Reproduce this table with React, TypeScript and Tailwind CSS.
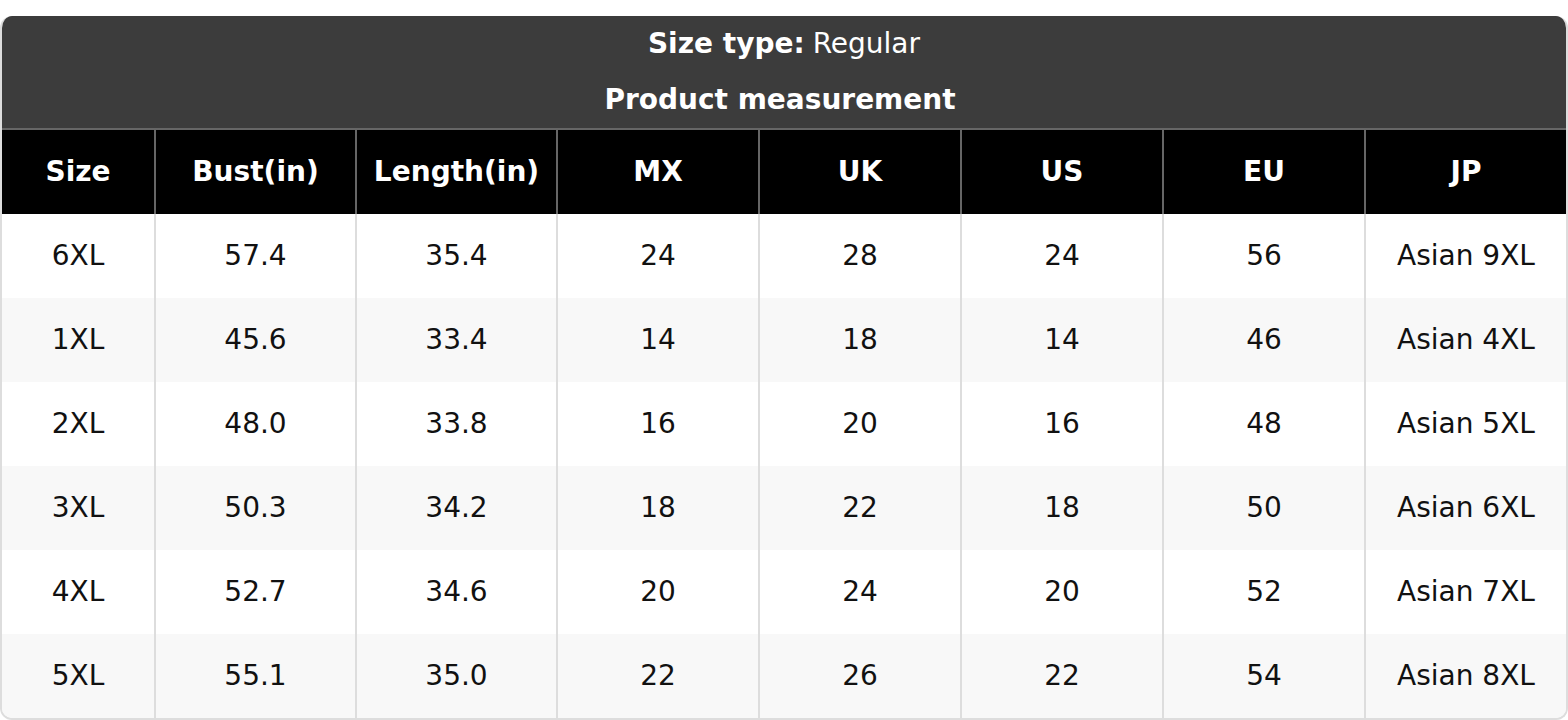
const headers = ['Size', 'Bust(in)', 'Length(in)', 'MX', 'UK', 'US', 'EU', 'JP'];

const rows = [
    ['6XL', '57.4', '35.4', '24', '28', '24', '56', 'Asian 9XL'],
    ['1XL', '45.6', '33.4', '14', '18', '14', '46', 'Asian 4XL'],
    ['2XL', '48.0', '33.8', '16', '20', '16', '48', 'Asian 5XL'],
    ['3XL', '50.3', '34.2', '18', '22', '18', '50', 'Asian 6XL'],
    ['4XL', '52.7', '34.6', '20', '24', '20', '52', 'Asian 7XL'],
    ['5XL', '55.1', '35.0', '22', '26', '22', '54', 'Asian 8XL'],
];

const cols = 'grid grid-cols-[152px_201px_201px_202px_202px_202px_202px_202px]';

export default function App() {
    return (
        <div className="bg-white pt-4 font-['DejaVu_Sans',sans-serif] text-[28px]">
            <div className="overflow-hidden rounded-[12px] border-2 border-t-0 border-[#dddddd]">
                {/* Title block */}
                <div className="bg-[#3c3c3c] text-white">
                    <div className="flex h-[56px] items-center justify-center">
                        <span className="font-bold">Size type:</span>
                        <span className="ml-2">Regular</span>
                    </div>
                    <div className="flex h-[56px] items-center justify-center pr-2 font-bold">
                        Product measurement
                    </div>
                </div>

                {/* Column headers */}
                <div className={`${cols} border-t-2 border-[#666666] bg-black text-white`}>
                    {headers.map((h, i) => (
                        <div
                            key={h}
                            className={`flex h-[84px] items-center justify-center font-bold ${i > 0 ? 'border-l-2 border-[#666666]' : ''}`}
                        >
                            {h}
                        </div>
                    ))}
                </div>

                {/* Body */}
                {rows.map((row, r) => (
                    <div key={r} className={`${cols} ${r % 2 === 1 ? 'bg-[#f8f8f8]' : 'bg-white'} text-[#111111]`}>
                        {row.map((c, i) => (
                            <div
                                key={i}
                                className={`flex h-[84px] items-center justify-center ${i > 0 ? 'border-l-2 border-[#dddddd]' : ''}`}
                            >
                                {c}
                            </div>
                        ))}
                    </div>
                ))}
            </div>
        </div>
    );
}
